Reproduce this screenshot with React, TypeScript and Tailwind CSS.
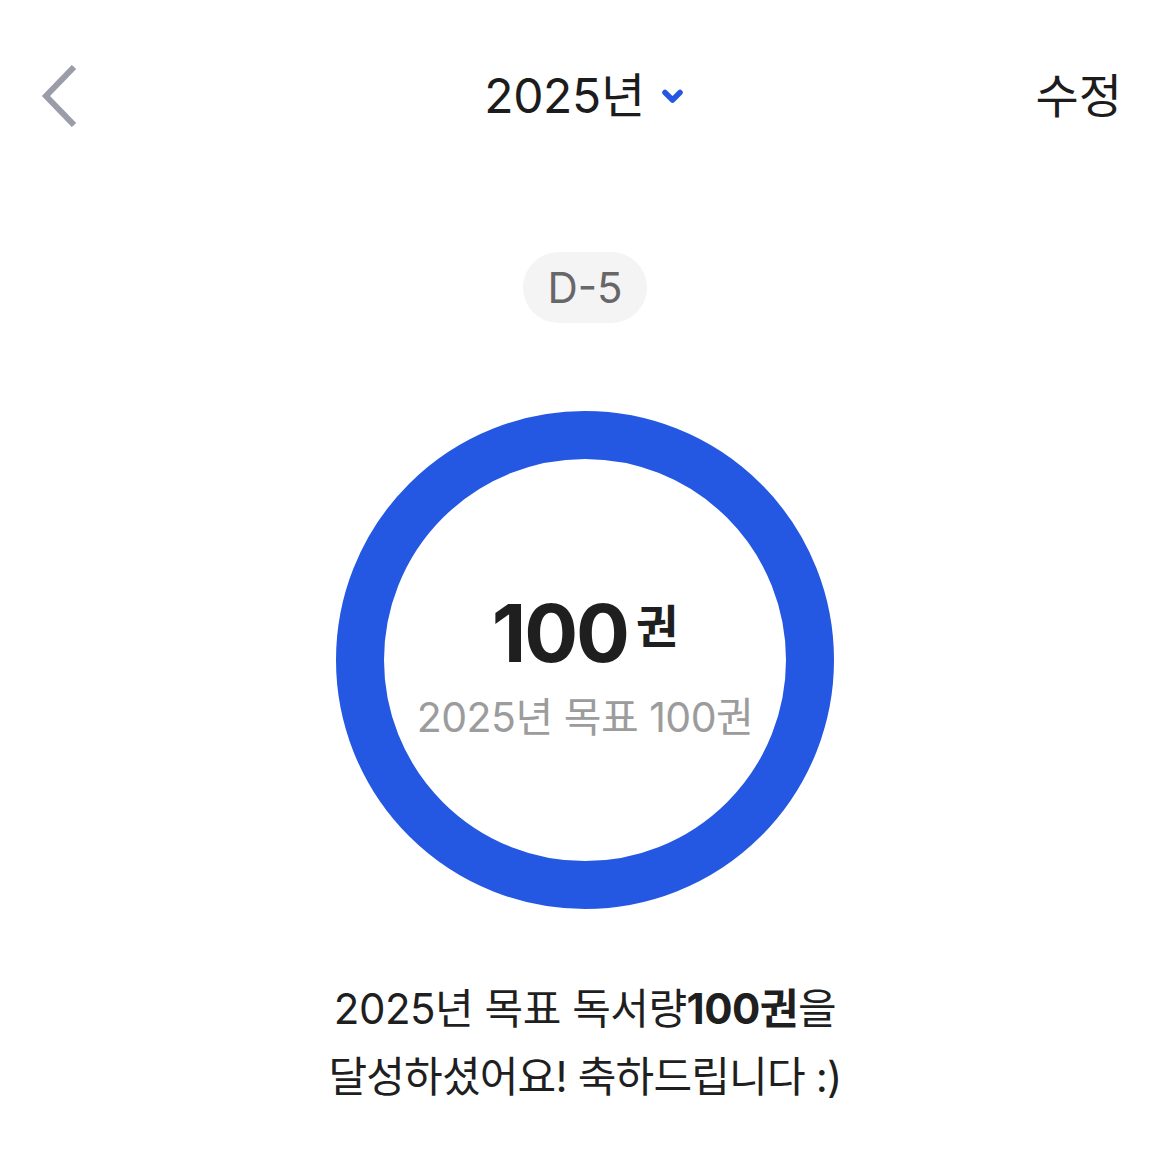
const font = { fontFamily: 'Inter, "Noto Sans CJK KR", sans-serif' }

function BackIcon() {
  return (
    <svg width="40" height="62" viewBox="0 0 40 62" fill="none">
      <path d="M34 2 L6 31 L34 60" stroke="#9a9ca8" strokeWidth="6" strokeLinecap="butt" strokeLinejoin="miter" />
    </svg>
  )
}

function Caret() {
  return (
    <svg width="23" height="17" viewBox="0 0 23 17" fill="none">
      <path d="M4 4.5 L11.5 12 L19 4.5" stroke="#2458e2" strokeWidth="5.5" strokeLinecap="round" strokeLinejoin="round" />
    </svg>
  )
}

export default function App() {
  return (
    <div className="w-[1170px] h-[1170px] bg-white flex flex-col items-center overflow-hidden" style={font}>
      <header className="w-full h-[192px] grid grid-cols-[1fr_auto_1fr] items-center pl-[40px] pr-[48px]">
        <div className="flex items-center">
          <BackIcon />
        </div>
        <button className="flex items-center gap-[16px] text-[48px] text-[#1c1c1c] tracking-[-0.3px] pl-[6px]">
          <span>2025년</span>
          <Caret />
        </button>
        <div className="flex justify-end text-[47px] text-[#1c1c1c]">수정</div>
      </header>

      <div className="mt-[60px] h-[71px] w-[124px] rounded-full bg-[#f4f4f4] flex items-center justify-center text-[42px] text-[#676767]">
        D-5
      </div>

      <div className="mt-[88px] w-[498px] h-[498px] rounded-full border-[48px] border-[#2458e2] flex flex-col items-center justify-center pt-[14px]">
        <div className="flex items-start gap-[8px] text-[#1f1f1f] -mt-[4px]">
          <span className="text-[80px] font-bold leading-none tracking-[-2px]">100</span>
          <span className="text-[46px] font-bold leading-none mt-[10px]">권</span>
        </div>
        <div className="mt-[24px] text-[41px] text-[#9c9c9c] leading-none tracking-[-0.5px]">2025년 목표 100권</div>
      </div>

      <div className="mt-[66px] text-center text-[42px] leading-[68px] text-[#1f1f1f] tracking-[-0.5px]">
        <p>
          2025년 목표 독서량<span className="font-bold">100권</span>을
        </p>
        <p className="tracking-[-0.8px]">달성하셨어요! 축하드립니다 :)</p>
      </div>
    </div>
  )
}
